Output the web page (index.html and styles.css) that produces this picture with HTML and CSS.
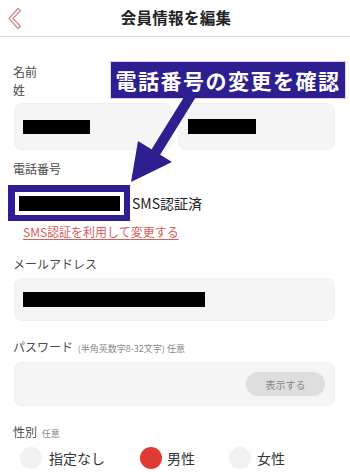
FILE: index.html
```html
<!DOCTYPE html>
<html lang="ja">
<head>
<meta charset="utf-8">
<link rel="stylesheet" href="styles.css">
</head>
<body>
<div class="page">
  <header class="topbar">
    <svg class="back" width="20" height="24" viewBox="0 0 20 24"><path d="M12 1.5 L3 11.5 L12 21.5 L14.5 19.5 L7 11.5 L14.5 3.5 Z" fill="none" stroke="#cf8d8d" stroke-width="1.3" stroke-linejoin="round"/></svg>
    <h1 class="title">会員情報を編集</h1>
  </header>

  <main class="form">
    <div class="label l-name">名前</div>
    <div class="label l-sei">姓</div>
    <div class="name-row">
      <div class="input"><span class="redact r-sei"></span></div>
      <div class="input input-r"><span class="redact r-mei"></span></div>
    </div>

    <div class="label l-phone">電話番号</div>
    <div class="phone-row">
      <span class="phone-frame"><span class="redact r-phone"></span></span>
      <span class="sms-done">SMS認証済</span>
    </div>
    <a class="sms-link">SMS認証を利用して変更する</a>

    <div class="label l-mail">メールアドレス</div>
    <div class="input input-mail"><span class="redact r-mail"></span></div>

    <div class="label l-pw">パスワード <span class="sub">(半角英数字8-32文字) 任意</span></div>
    <div class="input input-pw"><span class="show-btn">表示する</span></div>

    <div class="label l-sex">性別 <span class="sub">任意</span></div>
    <div class="radio-row">
      <div class="radio"><span class="dot"></span><span class="rtext">指定なし</span></div>
      <div class="radio"><span class="dot on"></span><span class="rtext">男性</span></div>
      <div class="radio"><span class="dot"></span><span class="rtext">女性</span></div>
    </div>
  </main>

  <div class="callout">電話番号の変更を確認</div>
  <svg class="arrow" width="80" height="100" viewBox="120 90 80 100">
    <line x1="193" y1="92" x2="154" y2="155" stroke="#2d1f8f" stroke-width="10"/>
    <polygon points="131,182 138,141 172,162" fill="#2d1f8f"/>
  </svg>
</div>
</body>
</html>
```
FILE: styles.css
```css
* { box-sizing: border-box; }
html, body { margin: 0; padding: 0; background: #fff; }
body {
  font-family: "Noto Sans CJK JP", "Noto Sans", sans-serif;
  color: #333;
  width: 350px;
  height: 472px;
  overflow: hidden;
}
.page { position: relative; width: 350px; height: 472px; }

.topbar {
  height: 37px;
  border-bottom: 1px solid #d8d8d8;
  display: flex;
  align-items: center;
  justify-content: center;
  position: relative;
}
.back { position: absolute; left: 6px; top: 7px; }
.title {
  margin: 0;
  font-size: 15.5px;
  font-weight: 700;
  color: #222;
  letter-spacing: 0.3px;
  margin-left: 2px;
  margin-top: -2px;
}

.form { padding: 0 15px 0 14px; display: flex; flex-direction: column; align-items: flex-start; }
.label {
  font-size: 12px;
  line-height: 18px;
  color: #4a4a4a;
  margin-left: -1px;
}
.sub { font-size: 9px; color: #888; margin-left: 2px; }
.l-name { margin-top: 26px; }
.l-phone { margin-top: 10px; }
.l-mail { margin-top: 15px; }
.l-pw { margin-top: 17px; }
.l-sex { margin-top: 17px; }

.input {
  background: #f5f5f5;
  border: 1px solid #efefef;
  border-radius: 8px;
  display: flex;
  align-items: center;
  width: 100%;
}
.name-row { display: flex; gap: 6px; margin-top: 4px; width: 100%; }
.name-row .input { height: 47px; padding-left: 8px; flex: 1; }
.redact { display: block; background: #000; }
.r-sei { width: 67px; height: 14px; margin-top: 1px; }
.r-mei { width: 68px; height: 15px; margin-left: 1px; }

.phone-row { display: flex; align-items: center; margin-top: 7px; margin-left: -6px; }
.phone-frame {
  display: block;
  border: 7px solid #2d1f8f;
  border-right-width: 6px;
  border-bottom-width: 6px;
  background: #fff;
  padding: 4px;
}
.r-phone { width: 101px; height: 15px; }
.sms-done { font-size: 14px; color: #222; margin-left: 2px; line-height: 20px; }
.sms-link {
  margin-top: 3px;
  margin-left: 9px;
  font-size: 12px;
  line-height: 16px;
  color: #d4605c;
  text-decoration: underline;
  text-underline-offset: 2px;
}

.input-mail { height: 43px; margin-top: 5px; padding-left: 8px; }
.r-mail { width: 182px; height: 15px; }

.input-pw { height: 44px; margin-top: 4px; justify-content: flex-end; padding-right: 9px; }
.show-btn {
  width: 79px;
  height: 24px;
  border-radius: 12px;
  background: #dedede;
  color: #888;
  font-size: 10px;
  display: flex;
  align-items: center;
  justify-content: center;
}

.radio-row { display: flex; margin-top: 4px; margin-left: 6px; }
.radio { display: flex; align-items: center; width: 120px; }
.radio:nth-child(2) { width: 89px; }
.dot { width: 22px; height: 22px; border-radius: 50%; background: #f1f1f1; }
.dot.on { background: #e03a36; }
.rtext { font-size: 14px; color: #333; line-height: 22px; }
.radio:nth-child(1) .rtext { margin-left: 7px; }
.radio:nth-child(2) .rtext { margin-left: 5px; }
.radio:nth-child(3) .rtext { margin-left: 6px; }

.callout {
  position: absolute;
  left: 111px;
  top: 62px;
  width: 234px;
  height: 36px;
  background: #2d1f8f;
  color: #fff;
  font-weight: 700;
  font-size: 21px;
  letter-spacing: 1.5px;
  display: flex;
  align-items: center;
  justify-content: center;
  box-shadow: 0 0 0 1px #d8d4ee;
}
.arrow { position: absolute; left: 120px; top: 90px; }
```
